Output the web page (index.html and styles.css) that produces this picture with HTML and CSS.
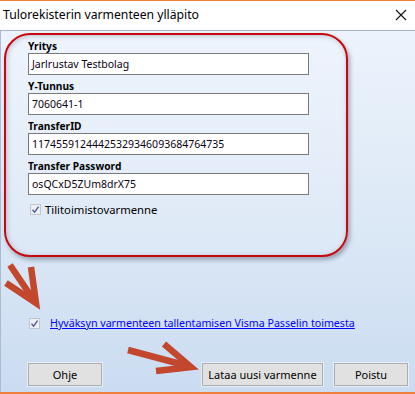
FILE: index.html
```html
<!DOCTYPE html>
<html>
<head>
<meta charset="utf-8">
<link rel="stylesheet" href="styles.css">
</head>
<body>
<div class="window">
  <div class="titlebar">
    <span class="title">Tulorekisterin varmenteen ylläpito</span>
    <svg class="close" width="12" height="12" viewBox="0 0 12 12"><path d="M1 1L11 11M11 1L1 11" stroke="#111" stroke-width="1.1" fill="none"/></svg>
  </div>
  <div class="content">
    <div class="panel">
      <div class="field">
        <div class="label">Yritys</div>
        <div class="input">Jarlrustav Testbolag</div>
      </div>
      <div class="field">
        <div class="label">Y-Tunnus</div>
        <div class="input">7060641-1</div>
      </div>
      <div class="field">
        <div class="label">TransferID</div>
        <div class="input">11745591244425329346093684764735</div>
      </div>
      <div class="field">
        <div class="label">Transfer Password</div>
        <div class="input">osQCxD5ZUm8drX75</div>
      </div>
      <div class="check">
        <svg class="box" width="11" height="11" viewBox="0 0 11 11"><rect x="0.5" y="0.5" width="10" height="10" fill="#eeeff2" stroke="#c3c6cc"/><path d="M2.5 5.8L4.6 8.2L8.6 2.6" stroke="#4d5c96" stroke-width="1.4" fill="none"/></svg>
        <span>Tilitoimistovarmenne</span>
      </div>
    </div>
    <div class="accept">
      <svg class="box" width="11" height="11" viewBox="0 0 11 11"><rect x="0.5" y="0.5" width="10" height="10" fill="#eeeff2" stroke="#c3c6cc"/><path d="M2.5 5.8L4.6 8.2L8.6 2.6" stroke="#4d5c96" stroke-width="1.4" fill="none"/></svg>
      <a class="link" href="#">Hyväksyn varmenteen tallentamisen Visma Passelin toimesta</a>
    </div>
    <div class="buttons">
      <div class="btn btn-small">Ohje</div>
      <div class="btn btn-wide">Lataa uusi varmenne</div>
      <div class="btn btn-small">Poistu</div>
    </div>
  </div>
  <svg class="arrows" width="415" height="394" viewBox="0 0 415 394">
    <g stroke="#c2472c" stroke-width="6.5" fill="none" stroke-linejoin="miter" stroke-miterlimit="10">
      <path d="M10 265L35 302"/>
      <path d="M31 267L36 303L6 283"/>
      <path d="M128 350L188 366"/>
      <path d="M164 344L191 367L156 371"/>
    </g>
  </svg>
</div>
</body>
</html>
```

FILE: styles.css
```css
html, body {
  margin: 0;
  padding: 0;
  background: #fff;
}

body {
  font-family: "Noto Sans", "Open Sans", sans-serif;
  font-size: 10.2px;
  color: #000;
}

.window {
  position: relative;
  width: 415px;
  height: 394px;
  box-sizing: border-box;
  border-top: 1px solid #ee7f3c;
  border-bottom: 2px solid #ee7f3c;
  display: flex;
  flex-direction: column;
  overflow: hidden;
}

.titlebar {
  height: 27px;
  flex: none;
  background: #fff;
  border-bottom: 1px solid #a4b7d2;
  display: flex;
  align-items: center;
  justify-content: space-between;
  padding: 0 8px 2px 3px;
}

.title {
  font-size: 12.2px;
  color: #000;
}

.close {
  display: block;
  margin-top: 1px;
}

.content {
  flex: 1;
  border-left: 1px solid #a9bcd5;
  background: linear-gradient(to bottom, #ecf3fc 0%, #dde9f6 50%, #cbdcf1 100%);
  display: flex;
  flex-direction: column;
}

.panel {
  margin: 2px 0 0 3px;
  width: 344px;
  height: 224px;
  box-sizing: border-box;
  border: 2px solid #c8070f;
  border-radius: 26px;
  padding: 5px 0 0 22px;
  background: linear-gradient(to bottom, #eef4fc 0%, #dde8f6 100%);
  box-shadow: 2px 3px 4px rgba(70, 85, 110, 0.45), inset 1px 1px 5px rgba(110, 120, 140, 0.4);
}

.field {
  margin-bottom: 5px;
}

.label {
  font-weight: bold;
  line-height: 13px;
  height: 13px;
}

.input {
  width: 281px;
  height: 22px;
  box-sizing: border-box;
  border: 1px solid #7a7a7a;
  background: #fff;
  padding-left: 3px;
  line-height: 20px;
  font-size: 10.5px;
  color: #0a0010;
}

.check {
  display: flex;
  align-items: center;
  height: 18px;
  padding-left: 2px;
  gap: 4px;
  font-size: 11.3px;
}

.box {
  display: block;
  flex: none;
}

.accept {
  display: flex;
  align-items: center;
  height: 18px;
  margin: 57px 0 0 28px;
  gap: 10px;
}

.link {
  color: #0000ff;
  text-decoration: underline;
  font-size: 10.65px;
}

.buttons {
  display: flex;
  margin: 31px 7px 0 27px;
  gap: 11px;
}

.btn {
  height: 23px;
  box-sizing: border-box;
  background: #e1e1e1;
  border: 1px solid #adadad;
  box-shadow: 0 0 0 1px rgba(255, 255, 255, 0.5);
  display: flex;
  align-items: center;
  justify-content: center;
  font-size: 11px;
  padding-bottom: 1px;
}

.btn-small {
  width: 74px;
}

.btn-wide {
  width: 121px;
  margin-left: auto;
}

.arrows {
  position: absolute;
  left: 0;
  top: -1px;
  pointer-events: none;
}
```
